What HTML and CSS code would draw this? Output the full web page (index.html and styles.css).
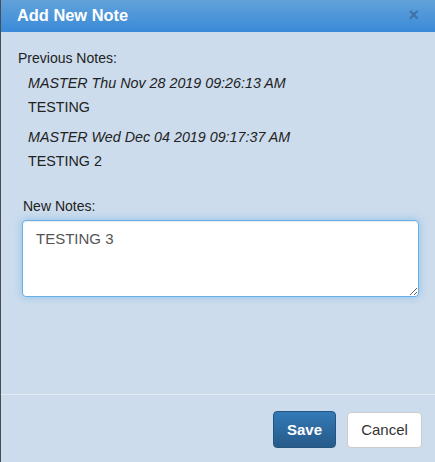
FILE: index.html
```html
<!DOCTYPE html>
<html>
<head>
<meta charset="utf-8">
<link rel="stylesheet" href="styles.css">
</head>
<body>
<div class="modal">
  <div class="header">
    <span class="title">Add New Note</span>
    <span class="close">×</span>
  </div>
  <div class="body">
    <div class="label prev">Previous Notes:</div>
    <div class="entry">
      <div class="meta">MASTER Thu Nov 28 2019 09:26:13 AM</div>
      <div class="text">TESTING</div>
    </div>
    <div class="entry">
      <div class="meta">MASTER Wed Dec 04 2019 09:17:37 AM</div>
      <div class="text">TESTING 2</div>
    </div>
    <div class="label newlabel">New Notes:</div>
    <textarea class="notes">TESTING 3</textarea>
  </div>
  <div class="footer">
    <button class="btn save">Save</button>
    <button class="btn cancel">Cancel</button>
  </div>
</div>
</body>
</html>
```
FILE: styles.css
```css
html, body {
  margin: 0;
  padding: 0;
  height: 100%;
}
body {
  font-family: "Liberation Sans", Arial, sans-serif;
  background: #cddcec;
  color: #222;
}
.modal {
  height: 462px;
  border-left: 1px solid #4a4d52;
  box-sizing: border-box;
  display: flex;
  flex-direction: column;
  background: #ccdcec;
}
.header {
  height: 32px;
  background: linear-gradient(#62a2d9, #3a8ad9);
  display: flex;
  align-items: center;
  justify-content: space-between;
  padding: 0 16px 0 16px;
  box-sizing: border-box;
}
.title {
  color: #fff;
  font-weight: bold;
  font-size: 16.4px;
  margin-top: -2px;
}
.close {
  color: #3e73a8;
  font-weight: bold;
  font-size: 18px;
  margin-top: -1px;
}
.body {
  padding: 18px 16px 0 17px;
  height: 363px;
  box-sizing: border-box;
  border-bottom: 1px solid #e3eaf2;
}
.label {
  font-size: 14px;
  line-height: 16px;
}
.prev {
  margin-bottom: 9px;
}
.entry {
  padding-left: 10px;
  font-size: 14.3px;
  margin-bottom: 14px;
}
.entry:last-of-type {
  margin-bottom: 6px;
}
.meta {
  font-style: italic;
  line-height: 16px;
  margin-bottom: 8px;
}
.text {
  line-height: 16px;
}
.newlabel {
  margin-top: 29px;
  margin-left: 5px;
  margin-bottom: 6px;
}
.notes {
  display: block;
  margin-left: 4px;
  width: 397px;
  height: 77px;
  box-sizing: border-box;
  border: 1px solid #66afe9;
  border-radius: 4px;
  box-shadow: inset 0 1px 1px rgba(0,0,0,.075), 0 0 8px rgba(102,175,233,.6);
  padding: 9px 13px;
  font-family: "Liberation Sans", Arial, sans-serif;
  font-size: 15px;
  color: #555;
  background: #fff;
  outline: none;
  resize: vertical;
}
.footer {
  display: flex;
  justify-content: flex-end;
  align-items: center;
  gap: 11px;
  padding: 16px 13px 0 0;
}
.btn {
  font-family: "Liberation Sans", Arial, sans-serif;
  font-size: 15px;
  border-radius: 4px;
  box-sizing: border-box;
  cursor: pointer;
}
.save {
  width: 63px;
  height: 37px;
  color: #fff;
  font-weight: bold;
  background: linear-gradient(#337ab7, #265a88);
  border: 1px solid #245580;
}
.cancel {
  width: 75px;
  height: 36px;
  color: #333;
  background: #fff;
  border: 1px solid #ccc;
}
```
